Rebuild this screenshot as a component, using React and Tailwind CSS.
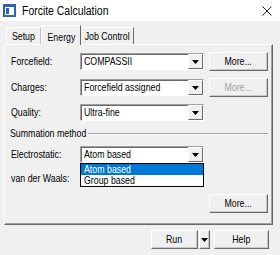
import React from "react";

const sans = "font-['Liberation_Sans',Arial,sans-serif]";

// the reference text is drawn narrow, so squeeze each label a little
function T({ children, center = false }) {
  return (
    <span
      className={`inline-block whitespace-nowrap scale-x-[0.8] ${
        center ? "origin-center" : "origin-left"
      }`}
    >
      {children}
    </span>
  );
}

function Arrow() {
  return (
    <svg width="7" height="4" viewBox="0 0 7 4">
      <path d="M0 0h7L3.5 4z" fill="#000" />
    </svg>
  );
}

function Combo({ value, children }) {
  return (
    <div className="relative w-[124px] h-[17px] bg-white border border-t-[#a0a0a0] border-l-[#a0a0a0] border-r-white border-b-white shadow-[inset_1px_1px_0_#696969] flex">
      <div className="flex-1 pl-[3px] flex items-center leading-none">
        {value && <T>{value}</T>}
      </div>
      <div className="w-[15px] h-[15px] bg-[#f0f0f0] border border-t-white border-l-white border-r-[#696969] border-b-[#696969] flex items-center justify-center">
        <Arrow />
      </div>
      {children}
    </div>
  );
}

function Btn({ children, disabled, className = "" }) {
  return (
    <div
      className={`h-[19px] bg-[#f0f0f0] border border-t-white border-l-white border-r-[#696969] border-b-[#696969] shadow-[inset_-1px_-1px_0_#c8c8c8] flex items-center justify-center leading-none ${
        disabled ? "text-[#a0a0a0]" : "text-black"
      } ${className}`}
    >
      {children}
    </div>
  );
}

function Row({ label, children, className = "" }) {
  return (
    <div className={`flex items-center ${className}`}>
      <div className="w-[70px] pl-[1px] whitespace-nowrap">
        <T>{label}</T>
      </div>
      {children}
    </div>
  );
}

export default function App() {
  return (
    <div className={`w-[280px] h-[255px] bg-[#f0f0f0] text-[11px] text-black overflow-hidden flex flex-col ${sans}`}>
      {/* title bar */}
      <div className="h-[21px] bg-white flex items-center pl-[3px] pr-[8px] shrink-0">
        <svg width="13" height="13" viewBox="0 0 13 13">
          <rect x="0" y="0" width="13" height="13" fill="#2a66b0" />
          <rect x="2" y="3" width="9" height="8" fill="#fff" />
          <rect x="3" y="4" width="3" height="6" fill="#2a66b0" />
        </svg>
        <span className="ml-[6px] text-[12px] inline-block whitespace-nowrap scale-x-[0.87] origin-left">
          Forcite Calculation
        </span>
        <svg className="ml-auto" width="10" height="10" viewBox="0 0 10 10">
          <path d="M0.5 0.5l9 9M9.5 0.5l-9 9" stroke="#222" strokeWidth="1" />
        </svg>
      </div>

      {/* tabs */}
      <div className="flex items-end h-[19px] mt-[4px] pl-[6px] relative z-10">
        <div className="h-[17px] w-[35px] border-t border-l border-t-white border-l-white border-r border-r-[#c0c0c0] flex items-center justify-center">
          <T center>Setup</T>
        </div>
        <div className="h-[20px] w-[40px] -mb-[1px] bg-[#f0f0f0] border-t border-l border-t-white border-l-white border-r border-r-[#696969] flex items-start pt-[3px] justify-center">
          <T center>Energy</T>
        </div>
        <div className="h-[17px] w-[53px] border-t border-t-white border-r border-r-[#696969] flex items-center justify-center">
          <T center>Job Control</T>
        </div>
      </div>

      {/* panel */}
      <div className="ml-[4px] w-[269px] h-[181px] border border-t-white border-l-white border-r-[#696969] border-b-[#696969] shadow-[inset_-1px_-1px_0_#a0a0a0] pl-[5px] pt-[7px] flex flex-col">
        <Row label="Forcefield:">
          <Combo value="COMPASSII" />
          <Btn className="w-[59px] ml-[5px]">
            <T center>More...</T>
          </Btn>
        </Row>
        <Row label="Charges:" className="mt-[7px]">
          <Combo value="Forcefield assigned" />
          <Btn className="w-[59px] ml-[5px]" disabled>
            <T center>More...</T>
          </Btn>
        </Row>
        <Row label="Quality:" className="mt-[7px]">
          <Combo value="Ultra-fine" />
        </Row>

        <div className="flex items-center mt-[6px] h-[13px] pr-[4px]">
          <div className="w-[78px]">
            <T>Summation method</T>
          </div>
          <div className="flex-1 h-[2px] border-t border-t-[#a0a0a0] border-b border-b-white" />
        </div>

        <Row label="Electrostatic:" className="mt-[6px] relative z-20">
          <Combo value="Atom based">
            <div className="absolute left-[-1px] top-[16px] w-[124px] bg-white border border-black flex flex-col leading-none">
              <div className="h-[11px] bg-[#0078d7] text-white pl-[3px] flex items-center">
                <T>Atom based</T>
              </div>
              <div className="h-[11px] pl-[3px] flex items-center">
                <T>Group based</T>
              </div>
            </div>
          </Combo>
        </Row>
        <Row label="van der Waals:" className="mt-[7px]">
          <Combo value="" />
        </Row>

        <div className="flex mt-[7px] pl-[199px]">
          <Btn className="w-[59px]">
            <T center>More...</T>
          </Btn>
        </div>
      </div>

      {/* bottom buttons */}
      <div className="flex mt-[5px] pl-[151px]">
        <Btn className="w-[47px]">
          <T center>Run</T>
        </Btn>
        <Btn className="w-[11px] ml-[1px]">
          <Arrow />
        </Btn>
        <Btn className="w-[55px] ml-[4px]">
          <T center>Help</T>
        </Btn>
      </div>
    </div>
  );
}
